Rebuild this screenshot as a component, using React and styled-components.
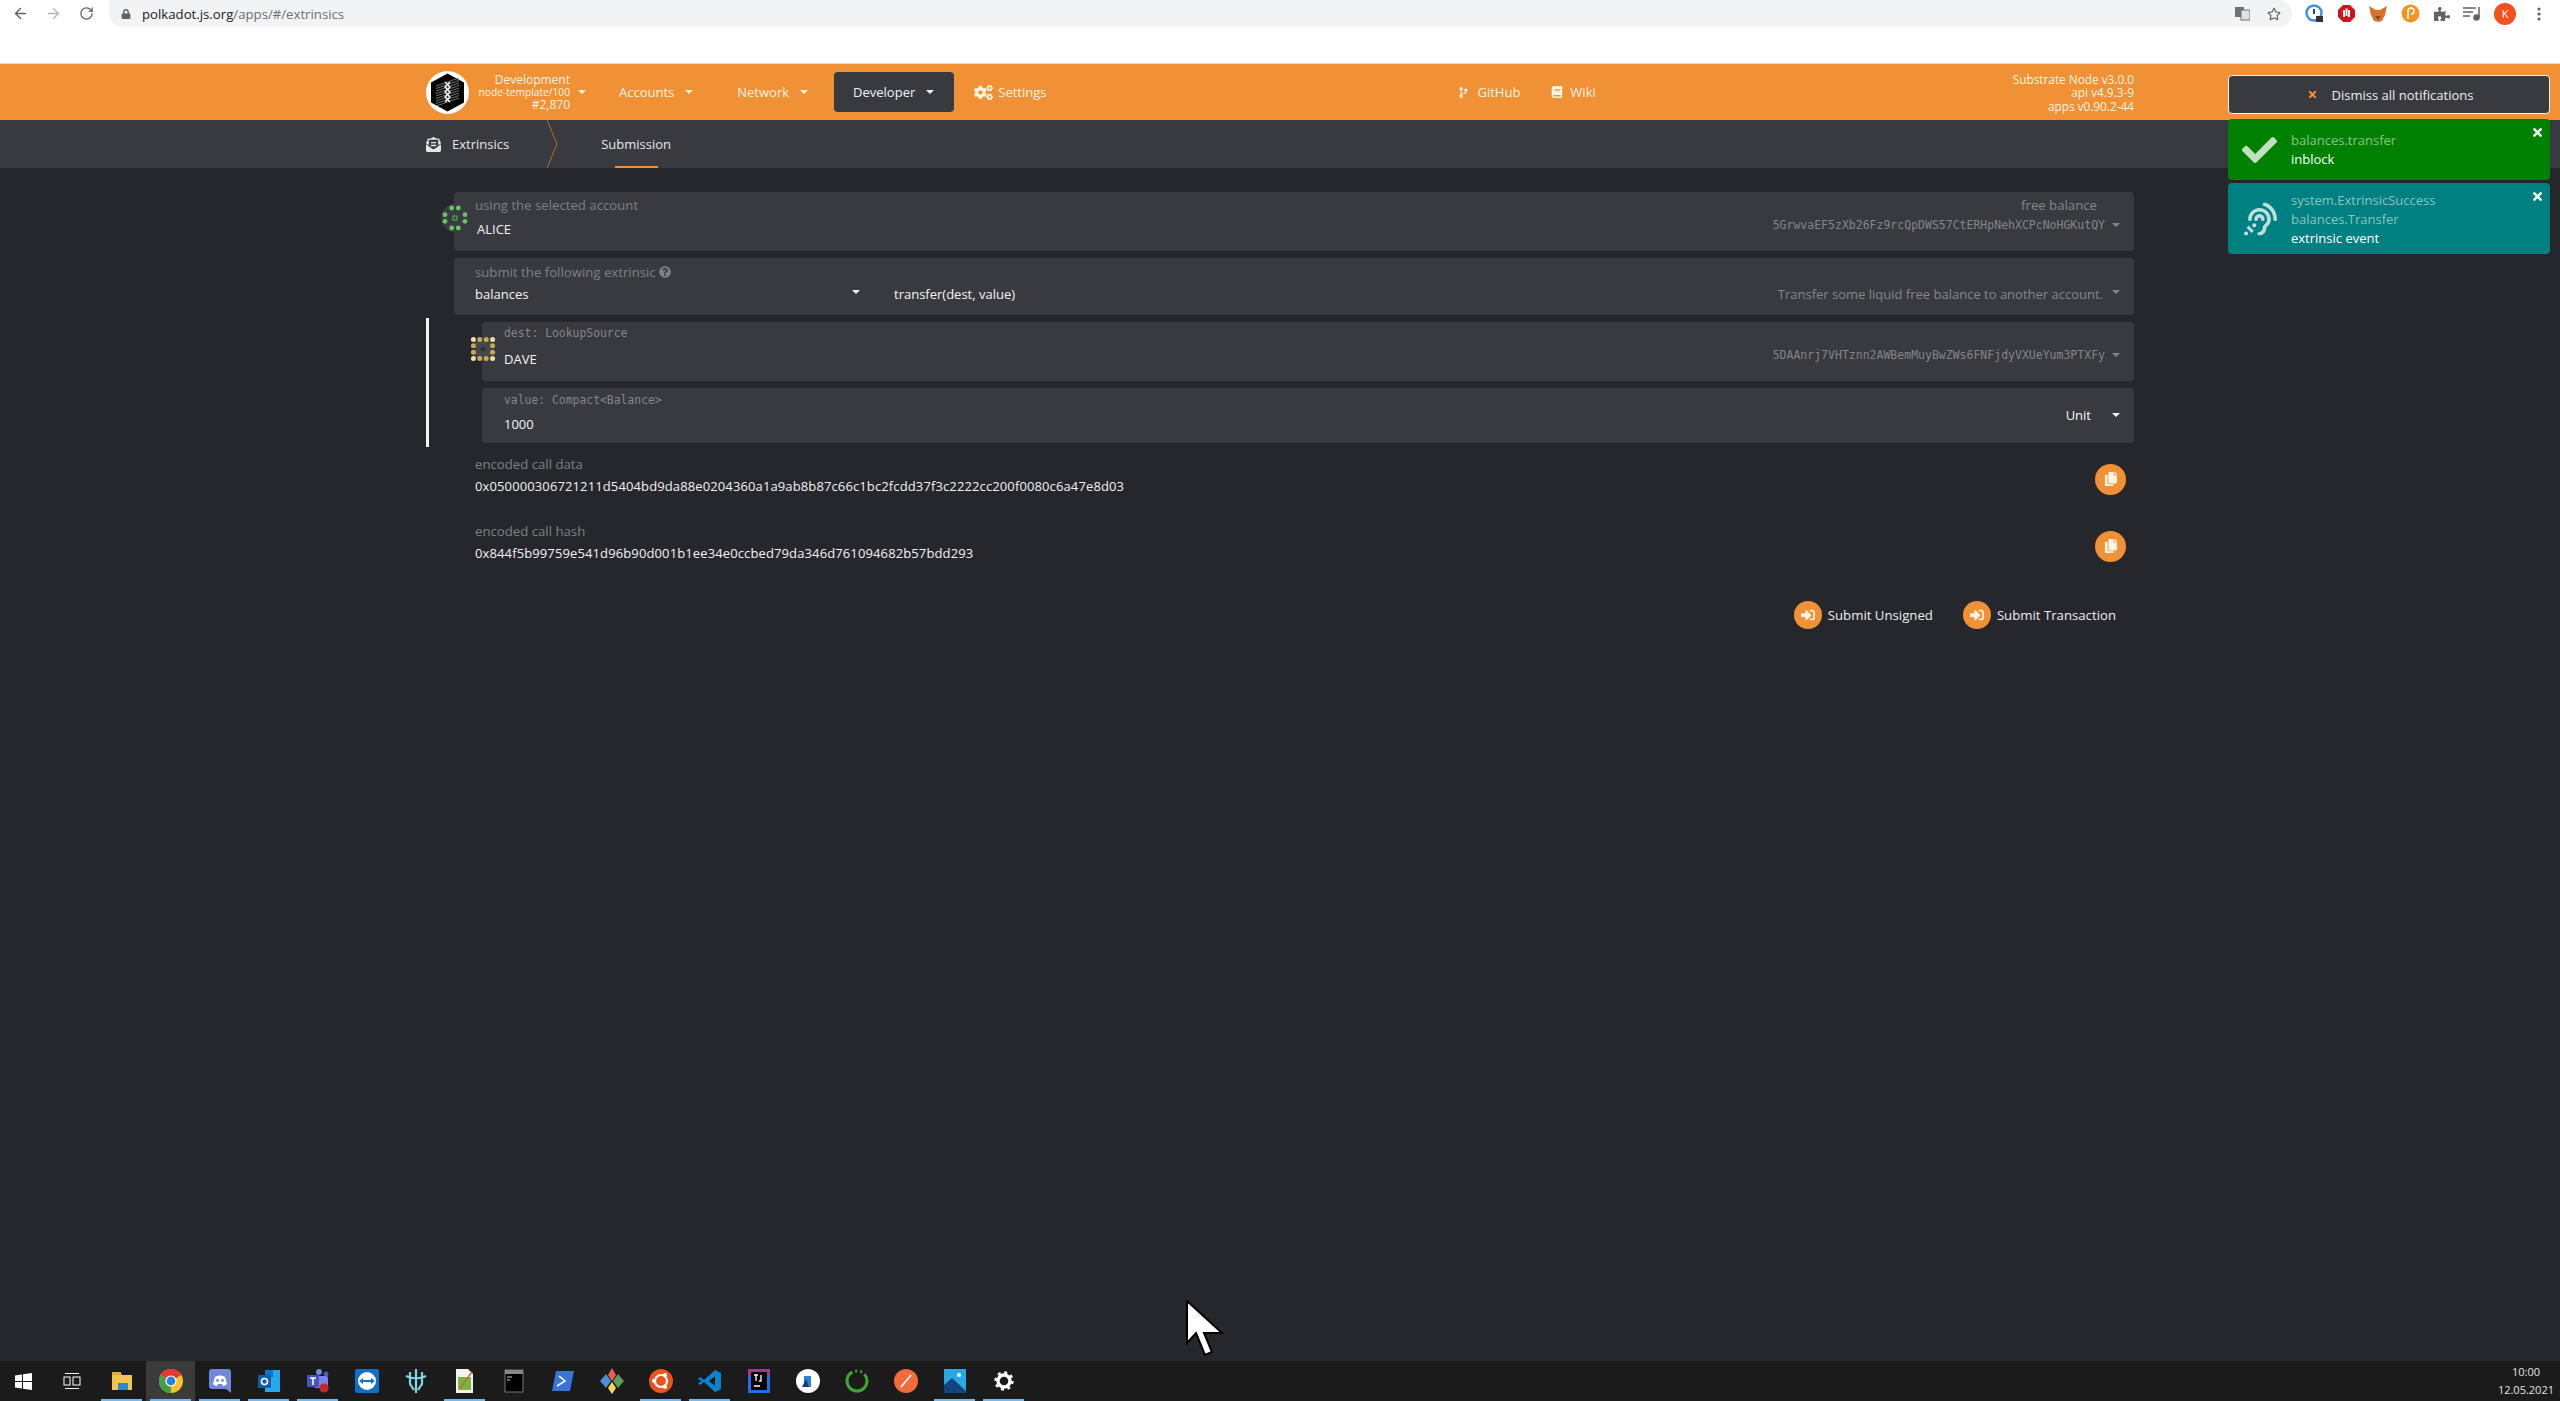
import React from 'react';
import styled, { createGlobalStyle } from 'styled-components';
import {
  FaAssistiveListeningSystems, FaBook, FaCheck, FaCodeBranch, FaCogs, FaCopy,
  FaEnvelopeOpenText, FaPuzzlePiece, FaQuestionCircle, FaSignInAlt, FaTimes, FaRegStar, FaLock,
} from 'react-icons/fa';
import { ArrowLeft, ArrowRight, RotateCw } from 'lucide-react';

const GlobalStyle = createGlobalStyle`
  html, body { margin: 0; padding: 0; background: #26272c; }
  * { box-sizing: border-box; }
  body { font-family: "Open Sans", "Noto Sans", sans-serif; font-size: 13px; color: #fff; }
`;

const Page = styled.div`
  position: relative;
  width: 2560px;
  height: 1401px;
  display: flex;
  flex-direction: column;
  overflow: hidden;
`;

/* browser chrome */
const BrowserBar = styled.div`
  flex: none;
  height: 64px;
  background: #fff;
  border-bottom: 1px solid #dcdcdc;
  display: flex;
  align-items: flex-start;
`;
const NavIcon = styled.span`
  width: 33px;
  height: 27px;
  display: flex;
  align-items: center;
  justify-content: center;
  color: ${p => p.$off ? '#b4b7ba' : '#5f6368'};
`;
const BackGroup = styled.div`
  flex: none;
  display: flex;
  padding-left: 4px;
  width: 109px;
`;
const Address = styled.div`
  flex: none;
  width: 2183px;
  height: 27px;
  background: #f1f3f4;
  border-radius: 0 14px 14px 14px;
  display: flex;
  align-items: center;
  padding: 0 0 0 12px;
  font-size: 13.2px;
  color: #6b6f73;
  svg { color: #5f6368; margin-right: 11px; }
  b { font-weight: 400; color: #202124; }
`;
const AddressEnd = styled.div`
  margin-left: auto;
  display: flex;
  gap: 6px;
  color: #5f6368;
  align-items: center;
`;
const Extensions = styled.div`
  flex: 1;
  height: 27px;
  display: flex;
  align-items: center;
  padding-left: 13px;
  gap: 12.7px;
`;
const Avatar = styled.span`
  width: 22px;
  height: 22px;
  border-radius: 50%;
  background: #f4511e;
  color: #fff;
  font-size: 11px;
  display: flex;
  align-items: center;
  justify-content: center;
`;

/* app header */
const Header = styled.header`
  flex: none;
  height: 56px;
  background: #f19135;
  display: flex;
  align-items: center;
  padding-left: 426px;
  color: #fff3e4;
`;
const ChainInfo = styled.div`
  width: 101px;
  text-align: right;
  line-height: 14px;
  font-size: 12px;
  small { display: block; font-size: 10.2px; line-height: 11px; }
`;
const Caret = styled.i`
  display: inline-block;
  flex: none;
  width: 0;
  height: 0;
  border-left: 4px solid transparent;
  border-right: 4px solid transparent;
  border-top: 4px solid ${p => p.$color || 'currentColor'};
`;
const NavItem = styled.div`
  height: 40px;
  display: flex;
  align-items: center;
  gap: ${p => p.$gap || 11}px;
  margin-left: ${p => p.$left}px;
  padding: ${p => p.$active ? '0 20px 0 19px' : '0'};
  border-radius: 4px;
  background: ${p => p.$active ? '#393a3f' : 'transparent'};
  color: ${p => p.$active ? '#eef2f6' : '#fff3e4'};
`;
const Versions = styled.div`
  margin-left: auto;
  width: 200px;
  margin-right: 426px;
  padding-top: 2px;
  text-align: right;
  font-size: 11.8px;
  line-height: 13.5px;
`;

/* sub navigation */
const SubNav = styled.nav`
  flex: none;
  height: 48px;
  background: #393a3f;
  display: flex;
  align-items: stretch;
  padding-left: 426px;
  color: #e6e6e7;
`;
const SubItem = styled.div`
  position: relative;
  display: flex;
  align-items: center;
  gap: 11px;
  margin-left: ${p => p.$left || 0}px;
`;
const Underline = styled.span`
  position: absolute;
  left: 14px;
  right: 13px;
  bottom: 0;
  height: 2px;
  background: #f19135;
`;
const Chevron = styled.svg`
  margin-left: 38px;
  display: block;
`;

/* main */
const Main = styled.main`
  flex: 1;
  padding: 24px 426px 0 454px;
  background: #26272c;
  display: flex;
  flex-direction: column;
`;
const Card = styled.section`
  position: relative;
  height: ${p => p.$h}px;
  margin-bottom: ${p => p.$mb ?? 7}px;
  padding: ${p => p.$top}px 14px 0 ${p => p.$pl || 21}px;
  background: #393a3f;
  border-radius: 4px;
  display: ${p => p.$stack ? 'block' : 'flex'};
  justify-content: space-between;
`;
const Label = styled.div`
  line-height: 18px;
  font-size: 13.2px;
  color: #7f8084;
  svg { margin-left: 3px; vertical-align: -1px; }
`;
const MonoLabel = styled(Label)`
  font-family: "DejaVu Sans Mono", "Liberation Mono", monospace;
  font-size: 11.4px;
  color: #84858a;
`;
const Value = styled.div`
  line-height: 18px;
  margin-top: ${p => p.$mt || 0}px;
  margin-left: ${p => p.$ml || 0}px;
  color: #f4f4f5;
`;
const RightCol = styled.div`
  text-align: right;
  padding-top: ${p => p.$top || 0}px;
`;
const Balance = styled.div`
  line-height: 18px;
  font-size: 13.2px;
  color: #85868a;
  padding-right: 23px;
`;
const Address58 = styled.div`
  display: flex;
  align-items: center;
  justify-content: flex-end;
  gap: 7px;
  line-height: 18px;
  margin-top: ${p => p.$mt || 0}px;
  font-family: "DejaVu Sans Mono", "Liberation Mono", monospace;
  font-size: 11.5px;
  color: #84858a;
`;
const ExtrinsicRow = styled.div`
  display: grid;
  grid-template-columns: 385px 1fr auto;
  margin-top: 4px;
  line-height: 18px;
`;
const SelectCell = styled.div`
  display: flex;
  align-items: center;
  justify-content: space-between;
  color: #f4f4f5;
  i { margin-top: -4px; }
`;
const MethodCell = styled.div`
  padding-left: 34px;
  color: #f4f4f5;
`;
const DocCell = styled.div`
  display: flex;
  align-items: center;
  gap: 9px;
  color: #85868a;
  i { margin-top: -4px; }
`;
const UnitCell = styled.div`
  align-self: flex-start;
  display: flex;
  align-items: center;
  gap: 21px;
  line-height: 18px;
  margin-top: 15px;
  color: #f4f4f5;
`;
const IdenticonSlot = styled.span`
  position: absolute;
  left: -15px;
  top: ${p => p.$top}px;
  display: block;
  width: 32px;
  height: 32px;
`;
const Params = styled.div`
  margin: -4px 0 0 -28px;
  padding: 4px 0 4px 53px;
  border-left: 3px solid #f4f4f5;
`;
const EncodedRow = styled.div`
  display: flex;
  justify-content: space-between;
  padding: 0 8px 0 21px;
  margin-top: ${p => p.$mt}px;
`;
const EncodedText = styled.div`
  line-height: 18px;
  span { display: block; margin-top: 4px; color: #f2f2f3; letter-spacing: .12px; }
`;
const RoundButton = styled.span`
  flex: none;
  width: ${p => p.$size}px;
  height: ${p => p.$size}px;
  border-radius: 50%;
  background: #f19135;
  color: #fff3e4;
  display: flex;
  align-items: center;
  justify-content: center;
`;
const CopyButton = styled(RoundButton)`
  margin-top: 8.5px;
`;
const Actions = styled.div`
  display: flex;
  justify-content: flex-end;
  gap: 30px;
  margin-top: 39px;
  padding-right: 18px;
`;
const ActionButton = styled.div`
  display: flex;
  align-items: center;
  gap: 6px;
  font-size: 13.2px;
  color: #e8eef3;
`;

/* notifications */
const Toasts = styled.aside`
  position: absolute;
  top: 75px;
  right: 10px;
  width: 322px;
  display: flex;
  flex-direction: column;
`;
const DismissAll = styled.div`
  height: 39px;
  margin-bottom: 5px;
  border: 1px solid #f4f4f5;
  border-radius: 4px;
  background: #393a3f;
  color: #eceded;
  display: flex;
  align-items: center;
  justify-content: center;
  gap: 14px;
  padding-left: 2px;
  svg { color: #f19135; }
`;
const Toast = styled.div`
  position: relative;
  height: ${p => p.$h}px;
  margin-bottom: 3px;
  padding: ${p => p.$top}px 0 0 63px;
  border-radius: 4px;
  background: ${p => p.$bg};
  line-height: 19px;
`;
const ToastIcon = styled.span`
  position: absolute;
  left: ${p => p.$left}px;
  top: 50%;
  transform: translateY(-50%);
  display: flex;
  color: rgba(255,255,255,.75);
`;
const ToastClose = styled.span`
  position: absolute;
  top: 7px;
  right: 6px;
  display: flex;
  color: #fff;
`;
const ToastMuted = styled.div`
  color: rgba(255,255,255,.55);
`;

/* taskbar */
const Taskbar = styled.footer`
  flex: none;
  height: 40px;
  background: #1b1b1b;
  display: flex;
  align-items: stretch;
`;
const Tile = styled.div`
  position: relative;
  width: ${p => p.$w || 49}px;
  display: flex;
  align-items: center;
  justify-content: center;
  background: ${p => p.$active ? '#3b3b3b' : 'transparent'};
  &::after {
    content: '';
    display: ${p => p.$open ? 'block' : 'none'};
    position: absolute;
    left: 4px;
    right: 4px;
    bottom: 0;
    height: 2px;
    background: #76b9ed;
  }
`;
const Clock = styled.div`
  margin-left: auto;
  padding: 2px 6px 0 0;
  text-align: center;
  font-size: 11px;
  line-height: 18px;
  color: #e4e4e4;
`;
const Cursor = styled.svg`
  position: absolute;
  left: 1186px;
  top: 1300px;
`;

const AliceIdenticon = () => (
  <svg width="32" height="32" viewBox="-16 -16 32 32">
    <circle r="14" fill="#3a3b40" />
    {[[-3.3, -10], [3.3, -10], [10, -3.3], [10, 3.3], [3.3, 10], [-3.3, 10], [-10, 3.3], [-10, -3.3]].map(([x, y]) => (
      <circle key={`${x}${y}`} cx={x} cy={y} r="2.4" fill="#5fcb5c" />
    ))}
    <rect x="-2" y="-2" width="4" height="4" fill="none" stroke="#58b858" strokeWidth="1" />
  </svg>
);

const DaveIdenticon = () => {
  const pts = [-9.6, -3.2, 3.2, 9.6];
  const dots = [];
  pts.forEach((y, r) => pts.forEach((x, c) => {
    if (r === 0 || r === 3 || c === 0 || c === 3) {
      const corner = (r === 0 || r === 3) && (c === 0 || c === 3);
      dots.push(<circle key={`${r}${c}`} cx={x} cy={y} r="2.5" fill={corner ? '#e9dfa8' : '#c8aa56'} />);
    }
  }));
  return (
    <svg width="32" height="32" viewBox="-16 -16 32 32">
      <rect x="-8" y="-8" width="16" height="16" fill="#46474b" />
      <path d="M0-4 1-1 4 0 1 1 0 4-1 1-4 0-1-1Z" fill="#2c2d31" />
      {dots}
    </svg>
  );
};

const Logo = () => (
  <svg width="43" height="43" viewBox="0 0 43 43">
    <circle cx="21.5" cy="21.5" r="21.5" fill="#fff" />
    <path d="M21.5 2.5 38 11.5v20L21.5 40.5 5 31.5v-20Z" fill="#050505" />
    {[12, 14.5, 17, 19.5, 22, 24.5, 27, 29.5, 32].map(y => (
      <path key={y} d={`M10 ${y + 3} 33 ${y - 5}`} stroke="#8d8d8d" strokeWidth=".8" />
    ))}
    <path d="M19 11 24 16 19 21 24 26 19 31M24 11 19 16 24 21 19 26 24 31" fill="none" stroke="#fff" strokeWidth="1.4" />
  </svg>
);

const TaskIcon = ({ name }) => {
  switch (name) {
    case 'windows':
      return <svg width="17" height="17" viewBox="0 0 17 17" fill="#fff"><path d="M0 2.4 7 1.4V8H0ZM8 1.2 17 0V8H8ZM0 9H7V15.6L0 14.6ZM8 9H17V17L8 15.8Z" /></svg>;
    case 'taskview':
      return <svg width="18" height="16" viewBox="0 0 18 16" fill="none" stroke="#fff"><path d="M2 .5H16M2 15.5H16" /><rect x="1" y="4" width="6" height="8" /><rect x="10" y="4" width="7" height="8" /></svg>;
    case 'explorer':
      return <svg width="22" height="22" viewBox="0 0 22 22"><path d="M1 2h8l2 3h10v15H1Z" fill="#f3c64b" /><rect x="1" y="2" width="9" height="3" fill="#e6a92e" /><rect x="7" y="13" width="10" height="7" fill="#2b88d8" /></svg>;
    case 'chrome':
      return <svg width="24" height="24" viewBox="0 0 24 24"><circle cx="12" cy="12" r="12" fill="#fbc02d" /><path d="M12 12 1.6 6A12 12 0 0 1 22.4 6Z" fill="#e53935" /><path d="M12 12 1.6 6A12 12 0 0 0 12 24Z" fill="#43a047" /><circle cx="12" cy="12" r="5.6" fill="#fff" /><circle cx="12" cy="12" r="4.4" fill="#2f7de1" /></svg>;
    case 'discord':
      return <svg width="22" height="24" viewBox="0 0 22 24"><path d="M3 0h16a3 3 0 0 1 3 3v21l-5-4H3a3 3 0 0 1-3-3V3a3 3 0 0 1 3-3Z" fill="#7289da" /><path d="M6 8c3-2 7-2 10 0l2 7c-1 1-3 2-4 2l-1-2H9l-1 2c-1 0-3-1-4-2Z" fill="#fff" /><circle cx="8.5" cy="11.5" r="1.4" fill="#7289da" /><circle cx="13.5" cy="11.5" r="1.4" fill="#7289da" /></svg>;
    case 'outlook':
      return <svg width="24" height="24" viewBox="0 0 24 24"><rect x="8" y="1" width="15" height="22" fill="#28a8ea" /><rect x="8" y="1" width="8" height="7" fill="#0078d4" /><rect x="1" y="6" width="13" height="13" rx="1" fill="#0f5fa8" /><circle cx="7.5" cy="12.5" r="3" fill="none" stroke="#fff" strokeWidth="1.6" /></svg>;
    case 'teams':
      return <svg width="24" height="26" viewBox="0 0 24 26"><circle cx="13" cy="4" r="3" fill="#7b83eb" /><circle cx="20" cy="6" r="2.4" fill="#5059c9" /><rect x="8" y="8" width="14" height="12" rx="2" fill="#7b83eb" /><rect x="1" y="7" width="12" height="12" rx="1" fill="#4b53bc" /><path d="M4 10h6M7 10v7" stroke="#fff" strokeWidth="1.6" /><circle cx="18" cy="20" r="4.6" fill="#c4262e" /></svg>;
    case 'teamviewer':
      return <svg width="24" height="24" viewBox="0 0 24 24"><rect width="24" height="24" rx="2" fill="#0e70c8" /><circle cx="12" cy="12" r="9" fill="#fff" /><path d="M4 12 8 9v2h8V9l4 3-4 3v-2H8v2Z" fill="#0e70c8" /></svg>;
    case 'network':
      return <svg width="22" height="26" viewBox="0 0 22 26" fill="none" stroke="#7fd7e6" strokeWidth="2.2"><path d="M11 1v24M5 4v12l4 6M17 4v12l-4 6M1 8c6 3 14 3 20 0" /></svg>;
    case 'notepad':
      return <svg width="20" height="26" viewBox="0 0 20 26"><path d="M1 1h12l5 5v19H1Z" fill="#f3f3f3" /><rect x="3" y="9" width="13" height="13" fill="#7cb342" /><path d="M5 20 17 4" stroke="#c0702c" strokeWidth="1.4" /></svg>;
    case 'terminal':
      return <svg width="20" height="24" viewBox="0 0 20 24"><rect x="1" y="1" width="18" height="22" fill="#000" stroke="#777" /><rect x="1" y="1" width="18" height="4" fill="#888" /><path d="M3 8h5M3 11h3" stroke="#ccc" /></svg>;
    case 'powershell':
      return <svg width="24" height="22" viewBox="0 0 24 22"><path d="M5 1h18l-4 20H1Z" fill="#3a74d4" /><path d="M8 6l6 5-8 5" fill="none" stroke="#fff" strokeWidth="1.6" /></svg>;
    case 'git':
      return <svg width="24" height="26" viewBox="0 0 24 26"><path d="M12 0 16 7 12 13 8 7Z" fill="#e8604c" /><path d="M13 13 18 6 24 13 18 20Z" fill="#5c9e57" /><path d="M11 13 6 6 0 13 6 20Z" fill="#4b8fd6" /><path d="M12 14 16 20 12 26 8 20Z" fill="#f2d95c" /></svg>;
    case 'ubuntu':
      return <svg width="24" height="24" viewBox="0 0 24 24"><circle cx="12" cy="12" r="12" fill="#e95420" /><circle cx="12" cy="12" r="6" fill="none" stroke="#fff" strokeWidth="2.2" /><circle cx="5" cy="12" r="2" fill="#fff" /><circle cx="16" cy="6" r="2" fill="#fff" /><circle cx="16" cy="18" r="2" fill="#fff" /></svg>;
    case 'vscode':
      return <svg width="24" height="24" viewBox="0 0 24 24"><path d="M17 1 23 4V20L17 23 6 13 2 16 0 14 4 12 0 10 2 8 6 11Z" fill="#0a84d0" /><path d="M17 7 11 12 17 17Z" fill="#1b1b1b" /></svg>;
    case 'idea':
      return <svg width="22" height="24" viewBox="0 0 22 24"><rect width="22" height="24" fill="#1f6feb" /><rect width="22" height="7" fill="#a4388c" /><rect x="3" y="3" width="16" height="18" fill="#000" /><path d="M6 6h4M8 6v6M13 6v6h-2M6 17h6" stroke="#fff" strokeWidth="1.3" fill="none" /></svg>;
    case 'word':
      return <svg width="24" height="24" viewBox="0 0 24 24"><circle cx="12" cy="12" r="12" fill="#fff" /><path d="M8 18V7h7v11" fill="#2d7fd3" /><path d="M6 18 10 10l3 8" fill="#153c7d" /></svg>;
    case 'ring':
      return <svg width="24" height="24" viewBox="0 0 24 24"><circle cx="12" cy="12" r="10" fill="none" stroke="#3fa535" strokeWidth="3" strokeDasharray="42 3 2 3 2 3" /></svg>;
    case 'postman':
      return <svg width="24" height="24" viewBox="0 0 24 24"><circle cx="12" cy="12" r="12" fill="#f26b3a" /><path d="M7 18 17 6" stroke="#fff" strokeWidth="1.6" /></svg>;
    case 'photos':
      return <svg width="22" height="24" viewBox="0 0 22 24"><rect width="22" height="24" fill="#2aa7e6" /><path d="M0 24 0 16 8 9 22 22V24Z" fill="#12447f" /><circle cx="15" cy="6" r="2" fill="#fff" /></svg>;
    default:
      return <svg width="20" height="20" viewBox="0 0 20 20"><circle cx="10" cy="10" r="6" fill="none" stroke="#fff" strokeWidth="3.4" /><circle cx="10" cy="10" r="8.5" fill="none" stroke="#fff" strokeWidth="2.4" strokeDasharray="3 3.67" /></svg>;
  }
};

const tiles = [
  { name: 'explorer', open: true }, { name: 'chrome', open: true, active: true }, { name: 'discord', open: true },
  { name: 'outlook', open: true }, { name: 'teams', open: true }, { name: 'teamviewer' }, { name: 'network' },
  { name: 'notepad', open: true }, { name: 'terminal' }, { name: 'powershell' }, { name: 'git' },
  { name: 'ubuntu', open: true }, { name: 'vscode', open: true }, { name: 'idea' }, { name: 'word' },
  { name: 'ring' }, { name: 'postman' }, { name: 'photos', open: true }, { name: 'settings', open: true },
];

export default function App() {
  return (
    <Page>
      <GlobalStyle />
      <BrowserBar>
        <BackGroup>
          <NavIcon><ArrowLeft size={17} /></NavIcon>
          <NavIcon $off><ArrowRight size={17} /></NavIcon>
          <NavIcon><RotateCw size={15} /></NavIcon>
        </BackGroup>
        <Address>
          <FaLock size={10} />
          <span><b>polkadot.js.org</b>/apps/#/extrinsics</span>
          <AddressEnd>
            <svg width="15" height="15" viewBox="0 0 15 15"><rect x="0" y="1" width="9" height="10" fill="#6d7175" /><rect x="6" y="4" width="9" height="10" fill="#dfe1e3" stroke="#6d7175" /></svg>
            <FaRegStar size={14} />
          </AddressEnd>
        </Address>
        <Extensions>
          <svg width="19" height="19" viewBox="0 0 19 19"><circle cx="9" cy="9" r="7.5" fill="none" stroke="#3f8fe0" strokeWidth="2.4" /><path d="M9 5v5" stroke="#444" strokeWidth="2" /><rect x="11" y="12" width="7" height="6" fill="#333" /></svg>
          <svg width="19" height="19" viewBox="0 0 19 19"><path d="M6 1h7l5 5v7l-5 5H6l-5-5V6Z" fill="#d3151b" /><path d="M7 13V6M9.5 12V4.5M12 13V6" stroke="#fff" strokeWidth="2" /></svg>
          <svg width="20" height="18" viewBox="0 0 20 18"><path d="M1 1 8 5h4l7-4-2 9-3 6-4 1-4-1-3-6Z" fill="#d9742a" /><path d="M7 11 10 15 13 11Z" fill="#7a4a24" /></svg>
          <svg width="19" height="19" viewBox="0 0 19 19"><circle cx="9.5" cy="9.5" r="9" fill="#f7931a" /><path d="M7 15V7a3 3 0 1 1 3 3" fill="none" stroke="#fff" strokeWidth="1.6" /></svg>
          <FaPuzzlePiece size={16} color="#5f6368" style={{ margin: '0 1px' }} />
          <svg width="18" height="15" viewBox="0 0 18 15" fill="none" stroke="#5f6368" strokeWidth="1.5"><path d="M0 2h13M0 6h10M0 10h7M16 1v10" /><circle cx="13.5" cy="11.5" r="2.5" fill="#5f6368" /></svg>
          <Avatar>K</Avatar>
          <svg width="4" height="14" viewBox="0 0 4 14" fill="#5f6368" style={{ marginLeft: 8 }}><circle cx="2" cy="2" r="1.6" /><circle cx="2" cy="7" r="1.6" /><circle cx="2" cy="12" r="1.6" /></svg>
        </Extensions>
      </BrowserBar>

      <Header>
        <Logo />
        <ChainInfo>
          Development
          <small>node-template/100</small>
          #2,870
        </ChainInfo>
        <NavItem $left={8}><Caret /></NavItem>
        <NavItem $left={33}>Accounts<Caret /></NavItem>
        <NavItem $left={44}>Network<Caret /></NavItem>
        <NavItem $left={26} $active>Developer<Caret /></NavItem>
        <NavItem $left={20} $gap={5}><FaCogs size={19} />Settings</NavItem>
        <NavItem $left={412} $gap={8}><FaCodeBranch size={11} />GitHub</NavItem>
        <NavItem $left={31} $gap={7}><FaBook size={12} />Wiki</NavItem>
        <Versions>
          Substrate Node v3.0.0<br />
          api v4.9.3-9<br />
          apps v0.90.2-44
        </Versions>
      </Header>

      <SubNav>
        <SubItem><FaEnvelopeOpenText size={15} />Extrinsics</SubItem>
        <Chevron width="12" height="48" viewBox="0 0 12 48"><path d="M0 0 10 24 0 48" fill="none" stroke="#b4702e" /></Chevron>
        <SubItem $left={42}>Submission<Underline /></SubItem>
      </SubNav>

      <Main>
        <Card $h={59} $top={4}>
          <IdenticonSlot $top={10}><AliceIdenticon /></IdenticonSlot>
          <div>
            <Label>using the selected account</Label>
            <Value $mt={6} $ml={2}>ALICE</Value>
          </div>
          <RightCol>
            <Balance>free balance</Balance>
            <Address58 $mt={2}>5GrwvaEF5zXb26Fz9rcQpDWS57CtERHpNehXCPcNoHGKutQY<Caret /></Address58>
          </RightCol>
        </Card>

        <Card $h={57} $top={5} $stack>
          <Label>submit the following extrinsic<FaQuestionCircle size={12} /></Label>
          <ExtrinsicRow>
            <SelectCell>balances<Caret /></SelectCell>
            <MethodCell>transfer(dest, value)</MethodCell>
            <DocCell>Transfer some liquid free balance to another account.<Caret /></DocCell>
          </ExtrinsicRow>
        </Card>

        <Params>
          <Card $h={59} $top={2} $pl={22}>
            <IdenticonSlot $top={11}><DaveIdenticon /></IdenticonSlot>
            <div>
              <MonoLabel>dest: LookupSource</MonoLabel>
              <Value $mt={8}>DAVE</Value>
            </div>
            <RightCol $top={22}>
              <Address58>5DAAnrj7VHTznn2AWBemMuyBwZWs6FNFjdyVXUeYum3PTXFy<Caret /></Address58>
            </RightCol>
          </Card>
          <Card $h={55} $top={3} $pl={22} $mb={0}>
            <div>
              <MonoLabel>value: Compact&lt;Balance&gt;</MonoLabel>
              <Value $mt={6}>1000</Value>
            </div>
            <UnitCell>Unit<Caret /></UnitCell>
          </Card>
        </Params>

        <EncodedRow $mt={8}>
          <EncodedText>
            <Label>encoded call data</Label>
            <span>0x050000306721211d5404bd9da88e0204360a1a9ab8b87c66c1bc2fcdd37f3c2222cc200f0080c6a47e8d03</span>
          </EncodedText>
          <CopyButton $size={31}><FaCopy size={14} /></CopyButton>
        </EncodedRow>
        <EncodedRow $mt={27}>
          <EncodedText>
            <Label>encoded call hash</Label>
            <span>0x844f5b99759e541d96b90d001b1ee34e0ccbed79da346d761094682b57bdd293</span>
          </EncodedText>
          <CopyButton $size={31}><FaCopy size={14} /></CopyButton>
        </EncodedRow>

        <Actions>
          <ActionButton><RoundButton $size={28}><FaSignInAlt size={14} /></RoundButton>Submit Unsigned</ActionButton>
          <ActionButton><RoundButton $size={28}><FaSignInAlt size={14} /></RoundButton>Submit Transaction</ActionButton>
        </Actions>
      </Main>

      <Taskbar>
        <Tile $w={46}><TaskIcon name="windows" /></Tile>
        <Tile $w={51}><TaskIcon name="taskview" /></Tile>
        {tiles.map(t => (
          <Tile key={t.name} $open={t.open} $active={t.active}><TaskIcon name={t.name} /></Tile>
        ))}
        <Clock>10:00<br />12.05.2021</Clock>
      </Taskbar>

      <Toasts>
        <DismissAll><FaTimes size={11} />Dismiss all notifications</DismissAll>
        <Toast $bg="#008000" $h={61} $top={12}>
          <ToastIcon $left={14}><FaCheck size={35} /></ToastIcon>
          <ToastClose><FaTimes size={13} /></ToastClose>
          <ToastMuted>balances.transfer</ToastMuted>
          <div>inblock</div>
        </Toast>
        <Toast $bg="#008080" $h={71} $top={8}>
          <ToastIcon $left={16}><FaAssistiveListeningSystems size={33} /></ToastIcon>
          <ToastClose><FaTimes size={13} /></ToastClose>
          <ToastMuted>system.ExtrinsicSuccess</ToastMuted>
          <ToastMuted>balances.Transfer</ToastMuted>
          <div>extrinsic event</div>
        </Toast>
      </Toasts>

      <Cursor width="38" height="57" viewBox="0 0 38 57">
        <path d="M1 1V43L10 33 19 55 26 52 18 33H36Z" fill="#fff" stroke="#000" strokeWidth="2" />
      </Cursor>
    </Page>
  );
}
